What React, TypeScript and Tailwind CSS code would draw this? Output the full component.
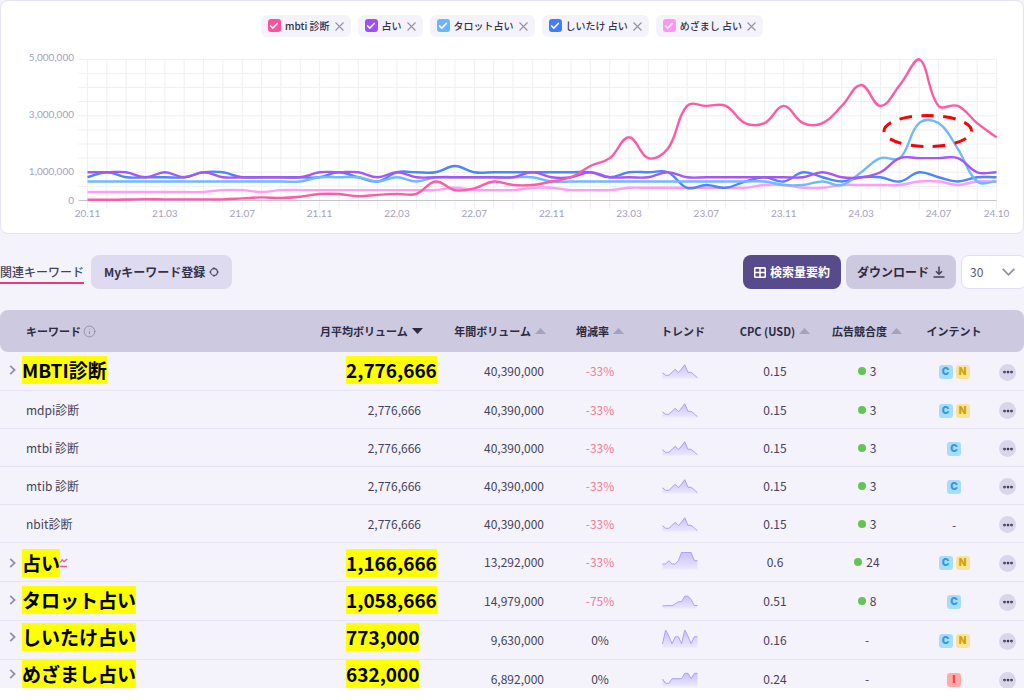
import { Check, Ellipsis, Info } from "lucide-react";

type Intent = "C" | "N" | "I";

interface Series {
  name: string;
  color: string;
  box: string;
  values: number[];
}

interface Row {
  keyword: string;
  volume: string;
  yearly: string;
  change: string;
  trend: number[];
  cpc: string;
  competition?: number;
  intents: Intent[];
  parent?: boolean;
  markPadding?: string;
  rising?: boolean;
}

// Monthly search volume in thousands, 20.11 to 24.10
const series: Series[] = [
  {
    name: "mbti 診断",
    color: "#ff5aa5",
    box: "bg-[#ff4fa0]",
    values: [
      27, 27, 33, 49, 40, 40, 40, 40, 74, 110, 90, 135, 230, 230, 150, 201, 235, 235, 673, 368, 430, 673, 550, 550,
      673, 823, 1220, 1500, 2240, 1500, 1830, 3350, 3350, 3350, 2740, 2740, 3350, 2740, 2740, 3350, 4090, 3350, 4090,
      5000, 3350, 3350, 2740, 2240,
    ],
  },
  {
    name: "占い",
    color: "#a855f7",
    box: "bg-[#a24dfb]",
    values: [
      1000, 1000, 1000, 823, 1000, 823, 1000, 823, 823, 823, 823, 823, 1000, 1000, 1000, 823, 1000, 823, 823, 823, 823,
      823, 823, 1000, 823, 823, 1000, 823, 823, 823, 1000, 823, 823, 823, 823, 823, 823, 823, 1000, 823, 823, 1000,
      1500, 1500, 1500, 1500, 1000, 1000,
    ],
  },
  {
    name: "タロット占い",
    color: "#70b8ff",
    box: "bg-[#69b5ff]",
    values: [
      673, 673, 673, 673, 673, 673, 673, 673, 673, 673, 673, 673, 823, 823, 823, 673, 823, 673, 823, 823, 823, 823, 823,
      823, 673, 673, 673, 673, 673, 673, 673, 673, 673, 673, 673, 673, 550, 550, 673, 550, 1000, 1500, 1500, 2740,
      2740, 1830, 673, 673,
    ],
  },
  {
    name: "しいたけ 占い",
    color: "#4a86ff",
    box: "bg-[#3f7ffc]",
    values: [
      823, 1000, 823, 823, 823, 823, 1000, 1000, 823, 823, 823, 823, 823, 1000, 823, 673, 1000, 1000, 1000, 1220, 1000,
      1000, 1000, 1000, 1000, 1000, 1000, 823, 1000, 1000, 1000, 450, 550, 450, 673, 823, 673, 1000, 823, 673, 823, 823,
      673, 1000, 823, 673, 823, 823,
    ],
  },
  {
    name: "めざまし 占い",
    color: "#ff9cf5",
    box: "bg-[#ff94f4]",
    values: [
      301, 301, 301, 301, 301, 301, 301, 368, 368, 301, 368, 368, 368, 368, 368, 368, 368, 368, 368, 450, 368, 368, 368,
      450, 450, 368, 368, 368, 450, 450, 450, 450, 450, 450, 450, 550, 550, 450, 450, 550, 550, 550, 550, 673, 673, 550,
      673, 673,
    ],
  },
];

const mbtiTrend = [11.7, 14.3, 14.3, 11.3, 8.3, 11.7, 8, 3.7, 11.3, 11.3, 14, 16.7];

const rows: Row[] = [
  { keyword: "MBTI診断", volume: "2,776,666", yearly: "40,390,000", change: "-33%", trend: mbtiTrend, cpc: "0.15", competition: 3, intents: ["C", "N"], parent: true, markPadding: "pt-1" },
  { keyword: "mdpi診断", volume: "2,776,666", yearly: "40,390,000", change: "-33%", trend: mbtiTrend, cpc: "0.15", competition: 3, intents: ["C", "N"] },
  { keyword: "mtbi 診断", volume: "2,776,666", yearly: "40,390,000", change: "-33%", trend: mbtiTrend, cpc: "0.15", competition: 3, intents: ["C"] },
  { keyword: "mtib 診断", volume: "2,776,666", yearly: "40,390,000", change: "-33%", trend: mbtiTrend, cpc: "0.15", competition: 3, intents: ["C"] },
  { keyword: "nbit診断", volume: "2,776,666", yearly: "40,390,000", change: "-33%", trend: mbtiTrend, cpc: "0.15", competition: 3, intents: [] },
  { keyword: "占い", volume: "1,166,666", yearly: "13,292,000", change: "-33%", trend: [12, 12, 8.7, 12, 12, 8.7, 0.5, 0.5, 0.5, 0.5, 8.7, 8.7], cpc: "0.6", competition: 24, intents: ["C", "N"], parent: true, markPadding: "pt-1.5", rising: true },
  { keyword: "タロット占い", volume: "1,058,666", yearly: "14,979,000", change: "-75%", trend: [14.8, 14.8, 14.5, 14.8, 12.8, 10.8, 10.6, 5.2, 5.2, 8.5, 14.5, 14.5], cpc: "0.51", competition: 8, intents: ["C"], parent: true, markPadding: "pt-1" },
  { keyword: "しいたけ占い", volume: "773,000", yearly: "9,630,000", change: "0%", trend: [13.8, 0, 6.2, 13.8, 6.8, 6.8, 13.8, 0, 6.2, 13.8, 6.8, 6.8], cpc: "0.16", intents: ["C", "N"], parent: true, markPadding: "pt-0.5" },
  { keyword: "めざまし占い", volume: "632,000", yearly: "6,892,000", change: "0%", trend: [10, 14.3, 14.3, 9.7, 9.7, 9.7, 9.7, 4.3, 4.3, 9.7, 4.3, 4.3], cpc: "0.24", intents: ["I"], parent: true, markPadding: "pt-0" },
];

const intentStyles: Record<Intent, string> = {
  C: "bg-[#a9dcfa] text-[#2f9be0]",
  N: "bg-[#f9e39b] text-[#cfa30c]",
  I: "bg-[#ffaaa6] text-[#f03e3e]",
};

const LEFT = 87.5;
const RIGHT = 996.5;
const TOP = 59.3;
const BOTTOM = 200.5;
const STEP = (RIGHT - LEFT) / 47;

const xAt = (i: number) => LEFT + i * STEP;
const yAt = (v: number) => BOTTOM - (v / 5000) * (BOTTOM - TOP);
const clampY = (y: number) => Math.min(BOTTOM, Math.max(TOP, y));

// Cardinal spline, control points weighted by the distance to each neighbour
function splinePath(values: number[], tension = 0.4) {
  const pts = values.map((v, i) => ({ x: xAt(i), y: yAt(v) }));
  const controls = pts.map((p, i) => {
    const prev = pts[Math.max(0, i - 1)];
    const next = pts[Math.min(pts.length - 1, i + 1)];
    const before = Math.hypot(p.x - prev.x, p.y - prev.y);
    const after = Math.hypot(next.x - p.x, next.y - p.y);
    const a = (tension * before) / (before + after);
    const b = (tension * after) / (before + after);
    return {
      inX: p.x - a * (next.x - prev.x),
      inY: clampY(p.y - a * (next.y - prev.y)),
      outX: p.x + b * (next.x - prev.x),
      outY: clampY(p.y + b * (next.y - prev.y)),
    };
  });
  return pts.reduce((d, p, i) => {
    if (i === 0) return `M${p.x} ${p.y}`;
    const from = controls[i - 1];
    const to = controls[i];
    return `${d} C${from.outX} ${from.outY} ${to.inX} ${to.inY} ${p.x} ${p.y}`;
  }, "");
}

const xLabels = ["20.11", "21.03", "21.07", "21.11", "22.03", "22.07", "22.11", "23.03", "23.07", "23.11", "24.03", "24.07"];

function VolumeChart() {
  return (
    <svg viewBox="1 37 1022 196" className="block w-full" role="img" aria-label="検索ボリューム推移">
      <g stroke="#efeff4" strokeWidth="1">
        {Array.from({ length: 48 }, (_, i) => (
          <line key={i} x1={xAt(i)} x2={xAt(i)} y1={TOP} y2={209} />
        ))}
        {Array.from({ length: 10 }, (_, i) => (
          <line key={i} x1={78.5} x2={RIGHT} y1={yAt(500 * (i + 1))} y2={yAt(500 * (i + 1))} />
        ))}
      </g>
      <line x1={78.5} x2={RIGHT} y1={BOTTOM} y2={BOTTOM} stroke="#c6c5cc" />
      {[...series].reverse().map((s) => (
        <path key={s.name} d={splinePath(s.values)} fill="none" stroke={s.color} strokeWidth="2.4" />
      ))}
      <ellipse cx="927.8" cy="131" rx="43.8" ry="15.5" fill="none" stroke="#fb0007" strokeWidth="3" pathLength="196" strokeDasharray="12.4 9.38" strokeDashoffset="-9.9" />
      <g className="fill-[#a5a1bd] font-['Lato',sans-serif] text-[10px]">
        <text x="74" y="61" textAnchor="end">5,000,000</text>
        <text x="74" y="118" textAnchor="end">3,000,000</text>
        <text x="74" y="175" textAnchor="end">1,000,000</text>
        <text x="74" y="204" textAnchor="end">0</text>
        {xLabels.map((label, i) => (
          <text key={label} x={xAt(i * 4)} y="217" textAnchor="middle">{label}</text>
        ))}
        <text x={RIGHT} y="217" textAnchor="middle">24.10</text>
      </g>
    </svg>
  );
}

function LegendChip({ item }: { item: Series }) {
  return (
    <li className="flex h-[22px] items-center gap-[5px] rounded-md bg-[#f4f3fb] px-[7px]">
      <label className="flex items-center gap-1 text-[10px] font-medium text-[#35324a]">
        <span className="grid">
          <input type="checkbox" defaultChecked className={`col-start-1 row-start-1 size-[13px] appearance-none rounded-[3px] ${item.box}`} />
          <Check className="pointer-events-none col-start-1 row-start-1 m-auto size-[10px] text-white" strokeWidth={4} />
        </span>
        {item.name}
      </label>
      <button type="button" aria-label={`${item.name} を削除`}>
        <svg viewBox="0 0 9 9" className="size-[9px]" fill="none" stroke="#9591ab" strokeWidth="1.1">
          <path d="M0.5 0.5L8.5 8.5M8.5 0.5L0.5 8.5" />
        </svg>
      </button>
    </li>
  );
}

function Sparkline({ points }: { points: number[] }) {
  const line = points.map((y, i) => `${0.5 + i * 3.18},${y}`).join(" ");
  return (
    <svg viewBox="0 0 36 20" className="inline-block h-5 w-9 overflow-visible align-middle">
      <defs>
        <linearGradient id="spark" x1="0" y1="0" x2="0" y2="1">
          <stop offset="0" stopColor="#c9c2f8" />
          <stop offset="1" stopColor="#ebe8fd" />
        </linearGradient>
      </defs>
      <polygon points={`0.5,17.5 ${line} 35.5,17.5`} fill="url(#spark)" />
      <polyline points={line} fill="none" stroke="#aba0f5" strokeWidth="1" />
    </svg>
  );
}

function SortArrow({ active = false }: { active?: boolean }) {
  return (
    <svg viewBox="0 0 11 6" className="inline-block h-1.5 w-[11px] shrink-0">
      {active ? <path d="M0 0H11L5.5 6Z" fill="#2e2b40" /> : <path d="M0 6H11L5.5 0Z" fill="#a5a1bd" />}
    </svg>
  );
}

function KeywordRow({ row }: { row: Row }) {
  const mark = "inline-block h-7 bg-[#ffff00] text-[19px] leading-7 font-bold text-black";
  return (
    <tr className={row.parent ? "h-[39px]" : "h-[38px]"}>
      {row.parent ? (
        <td className={`align-top ${row.markPadding}`}>
          <div className="flex h-7 items-center pl-[9px]">
            <button type="button" aria-label="展開" className="w-[13px]">
              <svg viewBox="0 0 7 10" className="h-2.5 w-[7px]" fill="none" stroke="#9490ac" strokeWidth="1.8">
                <path d="M1.2 0.8L5.6 5L1.2 9.2" />
              </svg>
            </button>
            <mark className={mark}>{row.keyword}</mark>
            {row.rising && (
              <svg viewBox="0 0 8 10" className="h-2.5 w-2" fill="none" stroke="#ee5a8c" strokeWidth="1.3">
                <path d="M0.3 4.5L2.2 1.8L4 3.6L7.3 1M0 8.5H7" />
              </svg>
            )}
          </div>
        </td>
      ) : (
        <td className="pl-[26px]">{row.keyword}</td>
      )}
      {row.parent ? (
        <td className={`pl-[26px] align-top whitespace-nowrap ${row.markPadding}`}>
          <mark className={mark}>{row.volume}</mark>
        </td>
      ) : (
        <td className="pr-[9px] text-right">{row.volume}</td>
      )}
      <td className="pr-[18px] text-right">{row.yearly}</td>
      <td className={`text-center ${row.change === "0%" ? "" : "text-[#f27c92]"}`}>{row.change}</td>
      <td className="pl-6"><Sparkline points={row.trend} /></td>
      <td className="text-center">{row.cpc}</td>
      <td>
        <div className="flex items-center justify-center gap-1">
          {row.competition !== undefined && <span className="size-2 rounded-full bg-[#62c554]" />}
          {row.competition ?? "-"}
        </div>
      </td>
      <td className="pt-0.5">
        <div className="flex items-center justify-center gap-[3px]">
          {row.intents.length === 0 && "-"}
          {row.intents.map((intent) => (
            <span key={intent} className={`flex size-3.5 items-center justify-center rounded-[3px] font-['Inter',sans-serif] text-[10px] font-black ${intentStyles[intent]}`}>
              {intent}
            </span>
          ))}
        </div>
      </td>
      <td className="pt-0.5 pl-[3px]">
        <button type="button" aria-label="メニュー" className="flex size-[17px] items-center justify-center rounded-full bg-[#d9d6ec] text-[#35324a]">
          <Ellipsis className="size-3" strokeWidth={3.5} />
        </button>
      </td>
    </tr>
  );
}

export default function App() {
  return (
    <div className="overflow-hidden bg-[#f4f3fb] font-['Noto_Sans_CJK_JP',sans-serif] text-xs text-[#45425a]">
      <section className="rounded-lg border border-[#e4e2f3] bg-white">
        <ul className="flex flex-wrap justify-center gap-[7px] pt-3.5">
          {series.map((item) => (
            <LegendChip key={item.name} item={item} />
          ))}
        </ul>
        <VolumeChart />
      </section>

      <div className="mt-[21px] flex items-center gap-[7px]">
        <a href="#related" className="border-b-2 border-[#ea3a7c] pt-1 pb-0.5 font-medium text-[#45425a]">関連キーワード</a>
        <button type="button" className="flex h-[34px] items-center gap-1 rounded-lg bg-[#dedbf1] px-[13px] font-bold text-[#35324a]">
          Myキーワード登録
          <svg viewBox="0 0 10 10" className="size-2.5" fill="none" stroke="#45425a" strokeWidth="1.1">
            <circle cx="5" cy="5" r="3.4" />
            <path d="M5 0.2V1.6M5 8.4V9.8M0.2 5H1.6M8.4 5H9.8" />
          </svg>
        </button>
        <div className="-mr-[3px] ml-auto flex items-center gap-[5px]">
          <button type="button" className="flex h-[34px] items-center gap-1 rounded-lg bg-[#584b8b] px-[11px] font-bold text-white">
            <svg viewBox="0 0 12 11" className="h-[11px] w-3" fill="none" stroke="currentColor" strokeWidth="1.5">
              <rect x="0.75" y="0.75" width="10.5" height="9.5" rx="0.8" />
              <path d="M6 1V10M1 5.5H11" />
              <path d="M1 1H11" strokeWidth="1.2" />
            </svg>
            検索量要約
          </button>
          <button type="button" className="flex h-[34px] items-center gap-1 rounded-lg bg-[#ccc9e1] px-[11px] font-bold text-[#2e2b40]">
            ダウンロード
            <svg viewBox="0 0 12 12" className="size-3" fill="none" stroke="#45425a" strokeWidth="1.5">
              <path d="M6 0.5V8M3 5.2L6 8.2L9 5.2M0.5 11H11.5" />
            </svg>
          </button>
          <div className="relative">
            <select aria-label="表示件数" defaultValue="30" className="h-[34px] w-[66px] appearance-none rounded-lg border border-[#e0def0] bg-white pl-2 text-xs text-[#5b5870]">
              <option>30</option>
              <option>50</option>
              <option>100</option>
            </select>
            <svg viewBox="0 0 13 8" className="pointer-events-none absolute top-[13px] right-3 h-2 w-[13px]" fill="none" stroke="#9490ac" strokeWidth="1.8">
              <path d="M0.7 0.9L6.5 6.8L12.3 0.9" />
            </svg>
          </div>
        </div>
      </div>

      <div className="mt-[21px] max-h-[378px] overflow-hidden">
        <table className="w-full table-fixed border-separate border-spacing-0 [&_tbody_td]:border-b [&_tbody_td]:border-[#e6e4f3]">
          <colgroup>
            <col />
            <col className="w-[110px]" />
            <col className="w-[132px]" />
            <col className="w-[76px]" />
            <col className="w-[90px]" />
            <col className="w-[94px]" />
            <col className="w-[90px]" />
            <col className="w-[84px]" />
            <col className="w-[28px]" />
          </colgroup>
          <thead className="text-[11px] text-[#2e2b40]">
            <tr className="h-[42px] [&>th]:bg-[#ccc9e1] [&>th]:font-bold [&>th]:whitespace-nowrap">
              <th className="rounded-l-lg pl-[26px] text-left">
                <span className="flex items-center gap-0.5">
                  キーワード
                  <Info className="size-[13px] text-[#9490ac]" strokeWidth={1.8} />
                </span>
              </th>
              <th className="text-left">
                <span className="flex items-center gap-1">月平均ボリューム<SortArrow active /></span>
              </th>
              <th>
                <span className="flex items-center justify-end gap-1 pr-4">年間ボリューム<SortArrow /></span>
              </th>
              <th>
                <span className="flex items-center justify-center gap-1">増減率<SortArrow /></span>
              </th>
              <th>トレンド</th>
              <th>
                <span className="flex items-center justify-center gap-1">CPC (USD)<SortArrow /></span>
              </th>
              <th>
                <span className="flex items-center justify-center gap-1">広告競合度<SortArrow /></span>
              </th>
              <th>インテント</th>
              <th className="rounded-r-lg" />
            </tr>
          </thead>
          <tbody>
            {rows.map((row) => (
              <KeywordRow key={row.keyword} row={row} />
            ))}
          </tbody>
        </table>
      </div>
    </div>
  );
}
